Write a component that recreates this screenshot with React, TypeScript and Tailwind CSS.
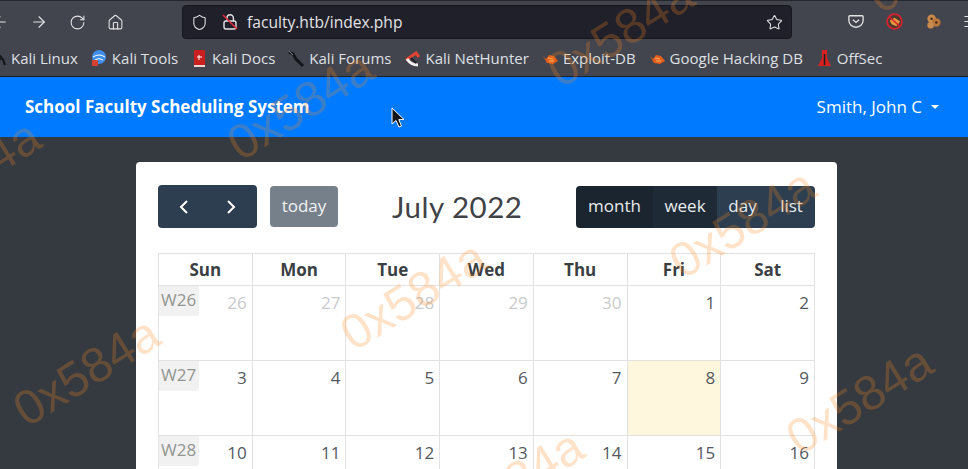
import { ArrowLeft, ArrowRight, RotateCw, Home, Shield, Star, Menu } from "lucide-react";

const weeks = [
  { week: "W26", days: ["26", "27", "28", "29", "30", "1", "2"], muted: 5 },
  { week: "W27", days: ["3", "4", "5", "6", "7", "8", "9"], muted: 0 },
  { week: "W28", days: ["10", "11", "12", "13", "14", "15", "16"], muted: 0 },
];

const headers = ["Sun", "Mon", "Tue", "Wed", "Thu", "Fri", "Sat"];

const marks = [
  { left: -113, top: 150 },
  { left: 6, top: 347 },
  { left: 220, top: 81 },
  { left: 333, top: 271 },
  { left: 430, top: 460 },
  { left: 540, top: 8 },
  { left: 662, top: 199 },
  { left: 779, top: 375 },
  { left: 860, top: -66 },
];

const Flame = () => (
  <svg width="17" height="12" viewBox="0 0 17 12">
    <path d="M1 3 L4 6 L7 2 L12 3 L16 8 L11 11 L5 10 Z" fill="#e2601c" />
    <path d="M6 5 L11 6 M7 8 L12 8" stroke="#f6b26b" strokeWidth="1" />
  </svg>
);

const Bookmark = ({ icon, label }: { icon: React.ReactNode; label: string }) => (
  <div className="flex items-center gap-[4px]">
    <span className="flex h-[18px] w-[17px] items-center justify-center">{icon}</span>
    <span>{label}</span>
  </div>
);

const App = () => {
  return (
    <div className="relative h-[469px] w-[968px] overflow-hidden bg-[#343a40] font-['Open_Sans',sans-serif]">
      {/* browser toolbar */}
      <div className="h-[77px] border-y border-t-[#26272e] border-b-[#1f2026] bg-[#42444e] text-[#e3e3e6]">
        <div className="flex h-[40px] items-center">
          <div className="ml-[-9px] flex w-[190px] shrink-0 items-center gap-[21px] pt-[2px]">
            <ArrowLeft className="h-[18px] w-[18px]" strokeWidth={1.5} />
            <ArrowRight className="h-[18px] w-[18px]" strokeWidth={1.5} />
            <RotateCw className="h-[17px] w-[17px]" strokeWidth={1.5} />
            <Home className="h-[17px] w-[17px]" strokeWidth={1.5} />
          </div>
          <div className="ml-[1px] mt-[2px] flex h-[34px] w-[610px] shrink-0 items-center rounded-[4px] border border-[#17181d] bg-[#1f2029] pl-[8px] pr-[8px]">
            <Shield className="h-[17px] w-[17px]" strokeWidth={1.5} />
            <svg className="ml-[14px]" width="17" height="18" viewBox="0 0 17 18" fill="none">
              <rect x="2" y="8" width="12" height="8" rx="2" stroke="#e3e3e6" strokeWidth="1.4" />
              <path d="M5 8 V5 a3.2 3.2 0 0 1 6.4 0 V8" stroke="#e3e3e6" strokeWidth="1.4" />
              <path d="M1 2 L15 16" stroke="#e2293b" strokeWidth="1.6" />
            </svg>
            <span className="ml-[8px] pt-[1px] text-[15.6px]">faculty.htb/index.php</span>
            <Star className="ml-auto h-[17px] w-[17px]" strokeWidth={1.5} />
          </div>
          <svg className="ml-[56px] mt-[1px] shrink-0" width="16" height="15" viewBox="0 0 18 16" fill="none">
            <path d="M2 1.5 H16 a1 1 0 0 1 1 1 V7 a8 7.5 0 0 1 -16 0 V2.5 a1 1 0 0 1 1 -1 Z" stroke="#e3e3e6" strokeWidth="1.5" />
            <path d="M5.5 6 L9 9 L12.5 6" stroke="#e3e3e6" strokeWidth="1.5" />
          </svg>
          <svg className="ml-[22px] mt-[1px] shrink-0" width="17" height="17" viewBox="0 0 18 18" fill="none">
            <circle cx="9" cy="9" r="7.8" fill="#4a3a30" stroke="#d8202f" strokeWidth="1.8" />
            <path d="M4 8 L9 5 L15 9 L11 14 L6 12 Z" fill="#e8963c" />
            <path d="M3.5 4 L14.5 14" stroke="#d8202f" strokeWidth="1.6" />
          </svg>
          <svg className="ml-[22px] mt-[1px] shrink-0" width="17" height="17" viewBox="0 0 18 18">
            <circle cx="7" cy="6" r="4.5" fill="#c98a4c" />
            <circle cx="12" cy="10" r="4.5" fill="#b9763a" />
            <circle cx="6" cy="13" r="3.5" fill="#c98a4c" />
            <circle cx="7" cy="6" r="1.3" fill="#3b2a1c" />
            <circle cx="12" cy="10" r="1.3" fill="#3b2a1c" />
          </svg>
          <Menu className="ml-[20px] mt-[1px] h-[17px] w-[17px] shrink-0" strokeWidth={1.5} />
        </div>
        <div className="flex h-[35px] items-center gap-[13px] whitespace-nowrap text-[15px] text-[#dfe0e4]">
          <div className="ml-[-6px] flex items-center gap-[5px]">
            <svg width="12" height="14" viewBox="0 0 12 14" fill="none">
              <path d="M1 3 C5 2 9 5 11 13 M1 8 L7 7" stroke="#15161a" strokeWidth="2" />
            </svg>
            <span>Kali Linux</span>
          </div>
          <Bookmark
            icon={
              <svg width="16" height="17" viewBox="0 0 16 17">
                <circle cx="8" cy="7" r="7" fill="#3f8ee8" />
                <path d="M2 7 Q8 3 14 7 M4 10 Q8 7 12 10" stroke="#fff" fill="none" />
                <rect x="1" y="10" width="6" height="6" rx="1" fill="#d8412f" />
              </svg>
            }
            label="Kali Tools"
          />
          <Bookmark
            icon={
              <svg width="13" height="17" viewBox="0 0 13 17">
                <rect x="1" y="0" width="11" height="15" rx="1" fill="#c9201f" />
                <rect x="1" y="15" width="11" height="2" fill="#f0d4d4" />
                <path d="M4 7 H9 M6 5 V10" stroke="#fff" strokeWidth="1" />
              </svg>
            }
            label="Kali Docs"
          />
          <Bookmark
            icon={
              <svg width="17" height="17" viewBox="0 0 17 17" fill="none">
                <path d="M1 2 L5 4 L8 9 L15 16" stroke="#14151a" strokeWidth="3" />
                <path d="M1 1 L5 5" stroke="#8a8c95" strokeWidth="1" />
              </svg>
            }
            label="Kali Forums"
          />
          <Bookmark
            icon={
              <svg width="17" height="16" viewBox="0 0 17 16" fill="none">
                <path d="M2 9 L12 2 L15 6" stroke="#e2452f" strokeWidth="3" />
                <path d="M3 8 Q7 14 14 14" stroke="#f2f2f2" strokeWidth="3" />
                <path d="M7 7 L12 12" stroke="#24252b" strokeWidth="2" />
              </svg>
            }
            label="Kali NetHunter"
          />
          <Bookmark icon={<Flame />} label="Exploit-DB" />
          <Bookmark icon={<Flame />} label="Google Hacking DB" />
          <Bookmark
            icon={
              <svg width="15" height="19" viewBox="0 0 15 19">
                <path d="M5 1 H10 V9 L14 17 H1 L5 9 Z" fill="#d8201f" />
                <path d="M7.5 5 V16" stroke="#1a1b20" strokeWidth="1.5" />
              </svg>
            }
            label="OffSec"
          />
        </div>
      </div>

      {/* navbar */}
      <nav className="flex h-[60px] items-center justify-between bg-[#007bff] pl-[25px] pr-[29px] text-white">
        <span className="text-[17px] font-bold">School Faculty Scheduling System</span>
        <div className="flex items-center text-[17px]">
          <span>Smith, John C</span>
          <span className="ml-[9px] h-0 w-0 border-x-[4px] border-t-[4.5px] border-x-transparent border-t-white" />
        </div>
      </nav>

      {/* calendar card */}
      <div className="ml-[136px] mt-[25px] w-[701px] rounded-[4px] bg-white px-[22px] pb-[20px] pt-[23px] text-[#212529]">
        <div className="flex items-center">
          <div className="flex h-[43px] w-[99px] items-center justify-around rounded-[4px] bg-[#2c3e50] px-[2px] text-white">
            <svg width="12" height="16" viewBox="0 0 12 16" fill="none">
              <path d="M9 2 L3 8 L9 14" stroke="#fff" strokeWidth="2" />
            </svg>
            <svg width="12" height="16" viewBox="0 0 12 16" fill="none">
              <path d="M3 2 L9 8 L3 14" stroke="#fff" strokeWidth="2" />
            </svg>
          </div>
          <div className="ml-[13px] flex h-[41px] w-[68px] items-center justify-center rounded-[4px] bg-[#76808b] pb-[1px] text-[17px] text-[#f1f2f3]">
            today
          </div>
          <h2 className="ml-[54px] font-['Lato',sans-serif] text-[29.5px] leading-none tracking-[0.5px] text-[#3f4348]">
            July 2022
          </h2>
          <div className="ml-auto flex h-[42px] w-[239px] items-center overflow-hidden rounded-[4px] text-[17px] text-[#e9ebed]">
            <span className="flex h-full w-[77px] items-center justify-center bg-[#1a252f] pb-[1px]">month</span>
            <span className="flex h-full w-[64px] items-center justify-center bg-[#1e2b37] pb-[1px]">week</span>
            <span className="flex h-full w-[51px] items-center justify-center bg-[#2c3e50] pb-[1px]">day</span>
            <span className="flex h-full flex-1 items-center justify-center bg-[#2c3e50] pb-[1px]">list</span>
          </div>
        </div>

        <div className="mt-[25px] grid w-[657px] grid-cols-7 border-l border-t border-[#e2e2e2]">
          {headers.map((h) => (
            <div
              key={h}
              className="h-[32px] border-b border-r border-[#e2e2e2] text-center text-[17px] font-bold leading-[31px] text-[#3a3f44]"
            >
              {h}
            </div>
          ))}
          {weeks.map((row) =>
            row.days.map((d, i) => (
              <div
                key={row.week + d}
                className={`relative h-[75px] border-b border-r border-[#e2e2e2] pr-[5px] pt-[4px] text-right text-[17px] leading-[26px] ${
                  i < row.muted ? "text-[#c9cacc]" : "text-[#55595e]"
                } ${d === "8" ? "bg-[#fef6dd]" : ""}`}
              >
                {i === 0 && (
                  <span className="absolute left-0 top-0 h-[30px] w-[40px] rounded-br-[3px] bg-[#f1f1f1] pl-[2px] text-left text-[17px] leading-[28px] text-[#92958f]">
                    {row.week}
                  </span>
                )}
                {d}
              </div>
            ))
          )}
        </div>
      </div>

      {/* watermark */}
      {marks.map((m) => (
        <span
          key={`${m.left}-${m.top}`}
          className="pointer-events-none absolute origin-center rotate-[-32deg] font-['Liberation_Sans',sans-serif] text-[49px] leading-none text-[#ff8a1f] opacity-[0.24]"
          style={{ left: m.left, top: m.top }}
        >
          0x584a
        </span>
      ))}

      {/* mouse pointer */}
      <svg className="absolute left-[391px] top-[107px]" width="15" height="22" viewBox="0 0 15 22">
        <path d="M1 1 L1 17 L5 13.5 L8 20 L10.5 19 L7.8 12.6 L13 12.5 Z" fill="#14161a" stroke="#fff" strokeWidth="1" />
      </svg>
    </div>
  );
};

export default App;
